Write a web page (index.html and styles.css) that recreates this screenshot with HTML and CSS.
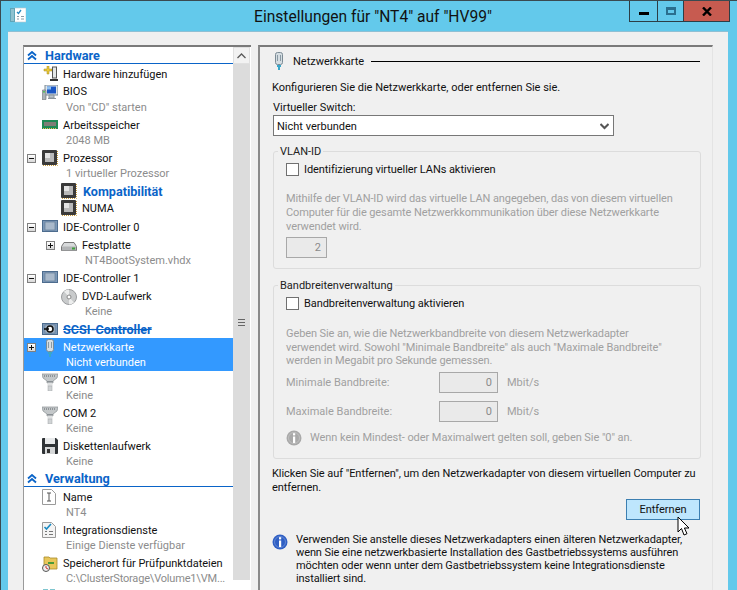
FILE: index.html
```html
<!DOCTYPE html>
<html lang="de">
<head>
<meta charset="utf-8">
<title>Einstellungen für "NT4" auf "HV99"</title>
<link rel="stylesheet" href="styles.css">
</head>
<body>
<svg class="defs" width="0" height="0" aria-hidden="true">
  <defs>
    <symbol id="chip" viewBox="0 0 16 16"><rect x="0" y="0" width="15" height="15" rx="1" fill="#3a3a3a"/><rect x="3" y="3" width="9" height="9" fill="#b9b9b9"/><rect x="3" y="3" width="5" height="5" fill="#e4e4e4"/><path d="M1 15.500h14.500V1" fill="none" stroke="#c79a3a" stroke-dasharray="1 1"/></symbol>
    <symbol id="ctrl" viewBox="0 0 16 12"><rect x=".5" y=".5" width="15" height="11" fill="#7d99b8" stroke="#4d6c8e"/><rect x="3" y="2" width="10" height="8" fill="#a9b9cb" stroke="#5d7590" stroke-width=".6"/></symbol>
    <symbol id="com" viewBox="0 0 16 18"><path d="M0 1h16l-1 4-4 3v2H5V8L1 5z" fill="#c3c7c9" stroke="#8a9094" stroke-width=".7"/><path d="M2 3h12" stroke="#5c6266" stroke-dasharray="1 1"/><path d="M5 8.500h6" stroke="#8a9094"/><rect x="5.500" y="10" width="5" height="3" fill="#dfe1e2"/><rect x="6" y="13" width="4" height="5" fill="#d0d3d5" stroke="#a0a4a7" stroke-width=".5"/></symbol>
    <symbol id="nic" viewBox="0 0 10 18"><rect x="1.500" y=".5" width="7" height="12" rx="2" fill="#d5dde2" stroke="#7b8b95"/><path d="M3.500 3v6M6.500 3v6" stroke="#8a9aa4"/><path d="M3 13h4v2H6v3H4v-3H3z" fill="#38a6c9"/></symbol>
    <symbol id="info" viewBox="0 0 16 16"><circle cx="8" cy="8" r="7.500" fill="currentColor"/><circle cx="8" cy="8" r="5.500" fill="currentColor" stroke="#fff" stroke-opacity=".25"/><rect x="7" y="3.200" width="2.200" height="2.200" fill="#fff"/><rect x="7" y="6.500" width="2.200" height="6.500" fill="#fff"/></symbol>
    <symbol id="chev" viewBox="0 0 10 10"><path d="M1 4.500L5 1l4 3.500M1 8.500L5 5l4 3.500" fill="none" stroke="#0a64c8" stroke-width="1.800"/></symbol>
  </defs>
</svg>

<div class="window">
  <header class="titlebar">
    <svg class="app-icon" width="16" height="16" viewBox="0 0 16 16"><rect x="4" y="1" width="12" height="14" fill="#fff" stroke="#b9c6cc" stroke-width=".6"/><rect x="0" y="1" width="5" height="14" fill="#5fa5b8"/><path d="M1 3h3M1 5h3M1 7h3M1 9h3M1 11h3M1 13h3" stroke="#d5ecf2" stroke-width=".8"/><path d="M7 5l1.500 1.500L11 3" fill="none" stroke="#2a8ac0" stroke-width="1.300"/><path d="M7 9.500h2M7 12h2M11 9.500h3M11 12h3" stroke="#8a9aa4"/></svg>
    <h1 class="title">Einstellungen für "NT4" auf "HV99"</h1>
    <div class="controls">
      <div class="ctl ctl-min"><span class="min-glyph"></span></div>
      <div class="ctl ctl-max"><span class="max-glyph"></span></div>
      <div class="ctl ctl-close">
        <svg width="10" height="9" viewBox="0 0 10 9"><path d="M1 .5l8 8M9 .5l-8 8" stroke="#000" stroke-width="2.400"/></svg>
      </div>
    </div>
  </header>

  <div class="client">
    <nav class="tree-panel">
      <div class="tree">
        <div class="section"><svg class="sec-ico"><use href="#chev"/></svg><span>Hardware</span></div>

        <div class="row s first"><span class="ico i2"><svg width="16" height="16" viewBox="0 0 16 16"><path d="M2 3h3V0h2v3h3v2H7v3H5V5H2z" fill="#e9c93a" stroke="#a68a1c" stroke-width=".5"/><rect x="10.500" y="1" width="4" height="11" fill="#e4e8e8" stroke="#555"/><rect x="8" y="13" width="9" height="2" fill="#333"/></svg></span><span class="t">Hardware hinzufügen</span></div>

        <div class="row d bios"><span class="ico i3"><svg width="16" height="15" viewBox="0 0 16 15"><rect x="3" y="0" width="13" height="10" fill="#dfe5ea" stroke="#7a8a95"/><rect x="5" y="1.500" width="9" height="7" fill="#1a56c4"/><rect x="5" y="1.500" width="4" height="3" fill="#8fc0f0"/><rect x="0" y="5" width="4" height="10" rx="1" fill="#aab2b8" stroke="#666" stroke-width=".6"/><rect x="1.200" y="6" width="1.600" height="1.600" fill="#4ac04a"/><path d="M7 10h5v3H7zM6 13.500h8" fill="#b9c2c9" stroke="#8a949b"/></svg></span><span class="t">BIOS</span><span class="sub">Von "CD" starten</span></div>

        <div class="row d"><span class="ico i4"><svg width="16" height="10" viewBox="0 0 16 10"><rect width="16" height="9" fill="#1f8a55"/><rect x="2" y="2" width="12" height="4" fill="#2c2c2c"/><path d="M3 2v4M5 2v4M7 2v4M9 2v4M11 2v4M13 2v4" stroke="#d0d0c0"/><path d="M1 8.500h14" stroke="#e3c552" stroke-dasharray="1 1"/></svg></span><span class="t">Arbeitsspeicher</span><span class="sub">2048 MB</span></div>

        <div class="row d"><span class="tog"><i class="minus"></i></span><span class="ico"><svg width="16" height="16"><use href="#chip"/></svg></span><span class="t">Prozessor</span><span class="sub">1 virtueller Prozessor</span></div>

        <div class="row s l2 kompat"><span class="ico"><svg width="16" height="16"><use href="#chip"/></svg></span><span class="t link">Kompatibilität</span></div>
        <div class="row s l2 numa"><span class="ico"><svg width="16" height="16"><use href="#chip"/></svg></span><span class="t">NUMA</span></div>

        <div class="row s"><span class="tog"><i class="minus"></i></span><span class="ico i2"><svg width="16" height="12"><use href="#ctrl"/></svg></span><span class="t">IDE-Controller 0</span></div>

        <div class="row d l2"><span class="tog"><i class="plus"></i></span><span class="ico i6"><svg width="16" height="9" viewBox="0 0 16 9"><path d="M3 .5h10l2.500 4v4H.5v-4z" fill="#d8dadb" stroke="#777"/><rect x="1" y="4.500" width="14" height="4" fill="#b2b4b6"/><rect x="11" y="5.500" width="3" height="2" fill="#3ea03e"/></svg></span><span class="t">Festplatte</span><span class="sub">NT4BootSystem.vhdx</span></div>

        <div class="row s"><span class="tog"><i class="minus"></i></span><span class="ico i2"><svg width="16" height="12"><use href="#ctrl"/></svg></span><span class="t">IDE-Controller 1</span></div>

        <div class="row d l2"><span class="ico i2"><svg width="16" height="16" viewBox="0 0 16 16"><circle cx="8" cy="8" r="7.500" fill="#c9cbcc" stroke="#9a9c9e"/><path d="M8 8L3 2.500A7.500 7.500 0 0 1 8 .5zM8 8l5 5.500A7.500 7.500 0 0 1 8 15.500z" fill="#eceded"/><circle cx="8" cy="8" r="2" fill="#fff" stroke="#888"/></svg></span><span class="t">DVD-Laufwerk</span><span class="sub">Keine</span></div>

        <div class="row s"><span class="ico i3"><svg width="16" height="12" viewBox="0 0 16 12"><use href="#ctrl" width="16" height="12"/><circle cx="8" cy="6" r="3" fill="#fff" stroke="#111" stroke-width="1.600"/><path d="M2 6h5" stroke="#111" stroke-width="1.600"/></svg></span><span class="t link strike">SCSI-Controller</span></div>

        <div class="row d selected"><span class="tog"><i class="plus"></i></span><span class="ico"><svg class="nic-tree" width="10" height="18"><use href="#nic"/></svg></span><span class="t">Netzwerkkarte</span><span class="sub">Nicht verbunden</span></div>

        <div class="row d"><span class="ico i2"><svg width="16" height="18"><use href="#com"/></svg></span><span class="t">COM 1</span><span class="sub">Keine</span></div>
        <div class="row d"><span class="ico i2"><svg width="16" height="18"><use href="#com"/></svg></span><span class="t">COM 2</span><span class="sub">Keine</span></div>

        <div class="row d"><span class="ico"><svg width="16" height="16" viewBox="0 0 16 16"><path d="M0 1a1 1 0 0 1 1-1h13l2 2v13a1 1 0 0 1-1 1H1a1 1 0 0 1-1-1z" fill="#2f3336"/><rect x="3" y="0" width="10" height="6" fill="#e8eaeb"/><rect x="3" y="9" width="10" height="7" fill="#d5d7d8"/><rect x="5" y="11" width="3" height="4" fill="#333"/></svg></span><span class="t">Diskettenlaufwerk</span><span class="sub">Keine</span></div>

        <div class="section second"><svg class="sec-ico"><use href="#chev"/></svg><span>Verwaltung</span></div>

        <div class="row d"><span class="ico"><svg width="14" height="16" viewBox="0 0 14 16"><path d="M.5.5h9l4 4v11H.5z" fill="#fff" stroke="#9a9a9a"/><path d="M5 4h4M5 12h4M7 4v8" stroke="#555"/></svg></span><span class="t">Name</span><span class="sub">NT4</span></div>

        <div class="row d"><span class="ico"><svg width="14" height="16" viewBox="0 0 14 16"><path d="M.5.5h9l4 4v11H.5z" fill="#f4f4f4" stroke="#9a9a9a"/><path d="M2.500 5l2 2L9 2" fill="none" stroke="#1b8ac2" stroke-width="1.600"/><path d="M3 9.500h2M3 12.500h2M7 9.500h4M7 12.500h4" stroke="#777"/></svg></span><span class="t">Integrationsdienste</span><span class="sub">Einige Dienste verfügbar</span></div>

        <div class="row d"><span class="ico i2"><svg width="16" height="16" viewBox="0 0 16 16"><path d="M2 1h5l1 1h7v11H2z" fill="#e8c65a" stroke="#a88a2a" stroke-width=".8"/><circle cx="4" cy="12" r="3.500" fill="#eee" stroke="#555"/><path d="M4 10v2l2 1" stroke="#c33" fill="none"/><path d="M6 7h6" stroke="#4a9a3a" stroke-width="2"/></svg></span><span class="t">Speicherort für Prüfpunktdateien</span><span class="sub path">C:\ClusterStorage\Volume1\VM...</span></div>

        <div class="row s"><span class="ico"><svg width="16" height="16" viewBox="0 0 16 16"><rect x="1" y="1" width="5" height="5" fill="#7fc6cf"/><rect x="8" y="1" width="5" height="5" fill="#7fc6cf"/></svg></span></div>
      </div>
      <div class="scrollbar">
        <div class="sb-up"><svg width="9" height="6" viewBox="0 0 9 6"><path d="M.5 5l4-4 4 4" fill="none" stroke="#5a5a5a" stroke-width="1.300"/></svg></div>
        <div class="sb-track"><span class="grip"></span></div>
        <div class="sb-end"></div>
      </div>
    </nav>

    <main class="pane">
      <div class="pane-head">
        <svg width="10" height="18"><use href="#nic"/></svg>
        <span class="pane-title">Netzwerkkarte</span>
        <span class="pane-rule"></span>
      </div>
      <p class="intro">Konfigurieren Sie die Netzwerkkarte, oder entfernen Sie sie.</p>
      <label class="field-label">Virtueller Switch:</label>
      <div class="select">
        <span>Nicht verbunden</span>
        <svg width="9" height="7" viewBox="0 0 9 7"><path d="M.5 1l4 4 4-4" fill="none" stroke="#555" stroke-width="2"/></svg>
      </div>

      <fieldset class="group vlan">
        <legend>VLAN-ID</legend>
        <div class="check"><span class="box"></span><span>Identifizierung virtueller LANs aktivieren</span></div>
        <p class="muted">Mithilfe der VLAN-ID wird das virtuelle LAN angegeben, das von diesem virtuellen<br>Computer für die gesamte Netzwerkkommunikation über diese Netzwerkkarte<br>verwendet wird.</p>
        <div class="num num-vlan">2</div>
      </fieldset>

      <fieldset class="group band">
        <legend>Bandbreitenverwaltung</legend>
        <div class="check"><span class="box"></span><span>Bandbreitenverwaltung aktivieren</span></div>
        <p class="muted">Geben Sie an, wie die Netzwerkbandbreite von diesem Netzwerkadapter<br>verwendet wird. Sowohl "Minimale Bandbreite" als auch "Maximale Bandbreite"<br>werden in Megabit pro Sekunde gemessen.</p>
        <div class="bw-row"><span class="bw-label">Minimale Bandbreite:</span><div class="num">0</div><span class="unit">Mbit/s</span></div>
        <div class="bw-row"><span class="bw-label">Maximale Bandbreite:</span><div class="num">0</div><span class="unit">Mbit/s</span></div>
        <div class="bw-note"><svg class="info-gray" width="16" height="16"><use href="#info"/></svg><span>Wenn kein Mindest- oder Maximalwert gelten soll, geben Sie "0" an.</span></div>
      </fieldset>

      <p class="remove-text">Klicken Sie auf "Entfernen", um den Netzwerkadapter von diesem virtuellen Computer zu<br>entfernen.</p>
      <div class="actions"><button class="btn" type="button">Entfernen</button></div>
      <div class="hint">
        <svg class="info-blue" width="16" height="16"><use href="#info"/></svg>
        <p>Verwenden Sie anstelle dieses Netzwerkadapters einen älteren Netzwerkadapter,<br>wenn Sie eine netzwerkbasierte Installation des Gastbetriebssystems ausführen<br>möchten oder wenn unter dem Gastbetriebssystem keine Integrationsdienste<br>installiert sind.</p>
      </div>
    </main>
  </div>
</div>

<svg class="cursor" width="15" height="22" viewBox="0 0 15 22"><path d="M1 1v15l3.500-3.500L7 19l3-1.300-2.600-5.700H12z" fill="#fff" stroke="#000"/></svg>
</body>
</html>
```
FILE: styles.css
```css
* { box-sizing: border-box; }
html, body { margin: 0; height: 100%; overflow: hidden; }
body {
  position: relative;
  font-family: Roboto, "Open Sans", "Liberation Sans", sans-serif;
  font-size: 11px;
  color: #111;
  background: #63c9eb;
}
.defs { position: absolute; }
.window {
  height: 590px;
  display: flex;
  flex-direction: column;
  border-top: 1px solid #3a4a50;
  border-left: 1px solid #3a4a50;
}

/* title bar */
.titlebar {
  height: 30px;
  flex: none;
  display: flex;
  align-items: flex-start;
  position: relative;
  padding-left: 9px;
}
.app-icon { margin-top: 6px; }
.title {
  position: absolute;
  left: 0;
  right: 0;
  top: 6px;
  margin: 0;
  padding-left: 8px;
  text-align: center;
  font-size: 15.600px;
  font-weight: 400;
  line-height: 20px;
  color: #111;
}
.controls {
  position: absolute;
  left: 628px;
  top: 0;
  height: 21px;
  display: flex;
  border: 1px solid #2c3e46;
  border-top: 0;
}
.ctl { height: 20px; display: flex; align-items: center; justify-content: center; }
.ctl-min { width: 28px; border-right: 1px solid #2c3e46; }
.ctl-max { width: 26px; border-right: 1px solid #2c3e46; }
.ctl-close { width: 45px; background: #c75b50; }
.min-glyph { width: 10px; height: 3px; background: #000; margin-top: 5px; }
.max-glyph { width: 10px; height: 8px; border: 2px solid #2a6f8e; border-top-width: 3px; }

/* client */
.client {
  flex: 1;
  min-height: 0;
  width: 720px;
  margin-left: 7px;
  background: #f0f0f0;
  border-top: 1px solid #8fc0d4;
  padding: 13px 16px 0 15px;
  display: flex;
  gap: 7px;
  overflow: hidden;
}

/* tree */
.tree-panel {
  width: 228px;
  flex: none;
  display: flex;
  height: 560px;
  background: #fff;
  border-top: 2px solid #7a7a7a;
  border-left: 1px solid #9a9a9a;
}
.tree { width: 209px; flex: none; }
.section {
  height: 17px;
  border-bottom: 1px solid #0a64c8;
  display: flex;
  align-items: center;
  color: #0a64c8;
  font-weight: 700;
  font-size: 12.700px;
  padding: 1px 0 0 3px;
  line-height: 13px;
}
.section.second { margin-bottom: 1px; }
.sec-ico { width: 10px; height: 10px; margin-right: 8px; }
.row {
  position: relative;
  padding: 2px 0 0 39px;
  line-height: 15px;
}
.row.s { height: 18px; }
.row.d { height: 33px; }
.row.first { padding-top: 3px; }
.row.bios { height: 34px; }
.row.bios .sub { padding-top: 1px; }
.row.kompat { height: 17px; }
.row.numa { height: 19px; }
.t { display: block; white-space: nowrap; }
.sub { display: block; color: #8c8c8c; padding-left: 3px; white-space: nowrap; }
.path { letter-spacing: -0.18px; }
.l2 { padding-left: 58px; }
.l2 .ico { left: 37px; }
.l2 .tog { left: 22px; }
.link { color: #0a64c8; font-weight: 700; font-size: 12.600px; }
.kompat .link { padding-left: 1px; }
.strike { text-decoration: line-through; }
.ico { position: absolute; left: 18px; top: 1px; display: flex; }
.ico.i2 { top: 2px; }
.ico.i3 { top: 3px; }
.ico.i4 { top: 4px; }
.ico.i6 { top: 6px; }
.tog {
  position: absolute;
  left: 3px;
  top: 5px;
  width: 9px;
  height: 9px;
  border: 1px solid #808080;
  background: linear-gradient(#fff, #d8d8d8);
  display: flex;
  align-items: center;
  justify-content: center;
}
.tog i { display: block; position: relative; width: 5px; height: 1px; background: #111; }
.tog i.plus::after { content: ""; position: absolute; left: 2px; top: -2px; width: 1px; height: 5px; background: #111; }
.selected { background: #3399ff; color: #fff; }
.selected .sub { color: #fff; }
.nic-tree { margin-left: 3px; }

/* scrollbar */
.scrollbar {
  width: 17px;
  flex: none;
  display: flex;
  flex-direction: column;
  background: #dcdcdc;
}
.sb-up {
  height: 17px;
  background: #f2f2f2;
  border: 1px solid #e0e0e0;
  display: flex;
  align-items: center;
  justify-content: center;
}
.sb-track { height: 516px; display: flex; align-items: flex-start; justify-content: center; }
.grip { margin-top: 255px; width: 7px; height: 7px; border-top: 1px solid #666; border-bottom: 1px solid #666; position: relative; }
.grip::after { content: ""; position: absolute; left: 0; right: 0; top: 2px; height: 1px; background: #666; }
.sb-end { flex: 1; background: #fff; }

/* right pane */
.pane {
  width: 455px;
  flex: none;
  height: 560px;
  border-top: 2px solid #7a7a7a;
  border-left: 2px solid #8a8a8a;
  border-right: 1px solid #e4e4e4;
  padding: 5px 12px 0 13px;
  white-space: nowrap;
}
.pane-head { display: flex; align-items: center; height: 18px; padding-left: 1px; }
.pane-title { margin-left: 9px; }
.pane-rule { width: 329px; height: 1px; background: #000; margin-left: auto; }
.intro { margin: 10px 0 0 -1px; line-height: 15px; }
.field-label { display: block; margin-top: 6px; line-height: 14px; }
.select {
  width: 341px;
  height: 21px;
  background: #fff;
  border: 1px solid #777;
  display: flex;
  align-items: center;
  justify-content: space-between;
  padding: 1px 4px 0 3px;
}
.group {
  margin: 0;
  padding: 0 12px;
  width: 428px;
  border: 1px solid #dcdcdc;
  border-radius: 3px;
  min-inline-size: 0;
}
.group legend { padding: 0 2px; margin-left: -8px; color: #222; line-height: 15px; }
.vlan { margin-top: 8px; height: 125px; }
.band { margin-top: 9px; height: 181px; }
.check { display: flex; align-items: center; gap: 5px; margin-top: 3px; line-height: 15px; letter-spacing: -0.07px; }
.box { width: 13px; height: 13px; background: #fff; border: 1px solid #707070; }
.muted { margin: 15px 0 0; color: #a0a0a0; line-height: 14px; letter-spacing: -0.1px; }
.band .muted { margin-top: 16px; line-height: 13.500px; }
.num {
  width: 60px;
  height: 21px;
  border: 1px solid #a8a8a8;
  background: #eaeaea;
  color: #8a8a8a;
  text-align: right;
  padding: 2px 5px;
  line-height: 15px;
}
.num-vlan { width: 41px; margin-top: 3px; }
.bw-row { display: flex; align-items: center; color: #a0a0a0; margin-top: 8px; }
.bw-row .num { width: 59px; }
.muted + .bw-row { margin-top: 4px; }
.bw-label { width: 153px; }
.unit { margin-left: 9px; }
.bw-note { display: flex; align-items: center; gap: 8px; color: #a0a0a0; margin-top: 8px; letter-spacing: -0.06px; }
.info-gray { color: #a9a9a9; }
.info-blue { color: #2f5fc4; flex: none; margin: 1px 0 0 -1px; }
.remove-text { margin: 8px 0 0 -1px; line-height: 14px; letter-spacing: -0.05px; }
.actions { display: flex; justify-content: flex-end; width: 427px; margin-top: 4px; }
.btn {
  width: 74px;
  height: 21px;
  padding: 0;
  font: inherit;
  color: #111;
  background: #bee6fd;
  border: 1px solid #3c7fb1;
}
.hint { display: flex; gap: 8px; margin-top: 13px; }
.hint p { margin: 0; line-height: 13px; letter-spacing: -0.1px; }

.cursor { position: absolute; left: 677px; top: 516px; }
```
